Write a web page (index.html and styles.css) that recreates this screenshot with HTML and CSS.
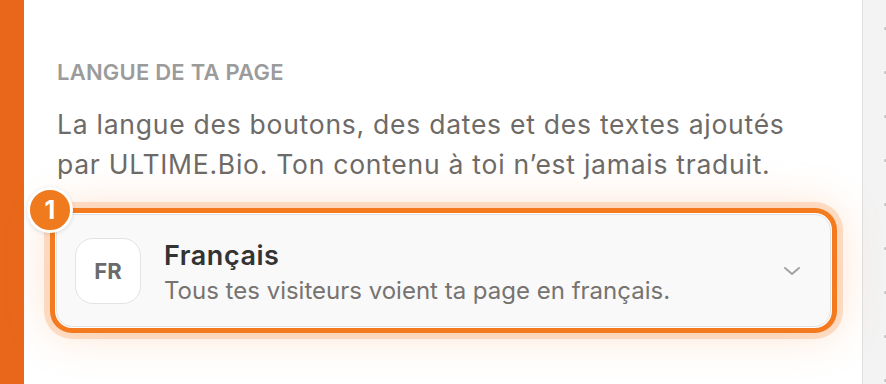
FILE: index.html
```html
<!DOCTYPE html>
<html lang="fr">
<head>
    <meta charset="UTF-8">
    <meta name="viewport" content="width=device-width, initial-scale=1.0">
    <title>Langue de ta page</title>
    <link rel="stylesheet" href="styles.css">
</head>
<body>
    <div class="rail"></div>

    <main class="panel">
        <h2 class="label">LANGUE DE TA PAGE</h2>
        <p class="hint">La langue des boutons, des dates et des textes ajoutés par ULTIME.Bio. Ton contenu à toi n’est jamais traduit.</p>

        <div class="picker">
            <span class="step">1</span>
            <div class="lang-card">
                <div class="lang-code">FR</div>
                <div class="lang-text">
                    <div class="lang-name">Français</div>
                    <div class="lang-desc">Tous tes visiteurs voient ta page en français.</div>
                </div>
                <svg class="chevron" width="18" height="10" viewBox="0 0 18 10">
                    <path d="M2 2l7 6 7-6" fill="none" stroke="#a3a3a3" stroke-width="2" stroke-linecap="round" stroke-linejoin="round"/>
                </svg>
            </div>
        </div>
    </main>

    <aside class="scroll">
        <span></span><span></span><span></span><span></span><span></span>
        <span></span><span></span><span></span><span></span>
    </aside>
</body>
</html>
```

FILE: styles.css
```css
body, html {
    margin: 0;
    padding: 0;
    height: 100%;
    overflow: hidden;
    font-family: Inter, "Noto Sans", sans-serif;
    background: #fff;
}

body {
    display: flex;
}

.rail {
    width: 24px;
    flex-shrink: 0;
    background: #e8671a;
}

.panel {
    flex: 1;
    padding: 58px 31px 0 32px;
}

.label {
    margin: 0;
    font-size: 22px;
    font-weight: 600;
    line-height: 28px;
    color: #9b9b9b;
    letter-spacing: 0.01em;
    padding-left: 1px;
}

.hint {
    margin: 18px 0 0;
    font-size: 26.5px;
    line-height: 40px;
    letter-spacing: 0.028em;
    color: #6e6a67;
    padding-left: 1px;
}

.picker {
    position: relative;
    margin-top: 30px;
}

.step {
    position: absolute;
    left: -29px;
    top: -27px;
    z-index: 3;
    width: 40px;
    height: 40px;
    border: 3px solid #fff;
    border-radius: 50%;
    background: #f07a1e;
    color: #fff;
    font-size: 25px;
    font-weight: 700;
    display: flex;
    align-items: center;
    justify-content: center;
    box-shadow: 0 1px 4px rgba(0, 0, 0, 0.12);
}

.lang-card {
    display: flex;
    align-items: center;
    height: 113px;
    padding: 0 29px 0 18px;
    box-sizing: border-box;
    background: #f9f9f9;
    border: 1px solid #e2e2e2;
    border-radius: 16px;
    box-shadow:
        0 0 0 1px #fff,
        0 0 0 6px #f47a1f,
        0 0 0 12px rgba(247, 150, 80, 0.28),
        0 0 40px 10px rgba(247, 150, 80, 0.25);
}

.lang-code {
    width: 66px;
    height: 66px;
    flex-shrink: 0;
    box-sizing: border-box;
    border: 1px solid #e3e3e3;
    border-radius: 18px;
    background: #fff;
    color: #6b6b6b;
    font-size: 22px;
    font-weight: 700;
    display: flex;
    align-items: center;
    justify-content: center;
}

.lang-text {
    flex: 1;
    margin: 6px 0 0 23px;
}

.lang-name {
    font-size: 27px;
    font-weight: 600;
    line-height: 32px;
    letter-spacing: 0.02em;
    color: #333;
}

.lang-desc {
    margin-top: 3px;
    font-size: 24px;
    line-height: 32px;
    color: #767370;
}

.scroll {
    width: 23px;
    flex-shrink: 0;
    border-left: 1px solid #e0e0e0;
    background: #f3f3f3;
    display: flex;
    flex-direction: column;
    align-items: flex-end;
    gap: 41px;
    padding-top: 27px;
}

.scroll span {
    width: 3px;
    height: 3px;
    margin-right: -1px;
    border-radius: 50%;
    background: #c4c4c4;
}
```
